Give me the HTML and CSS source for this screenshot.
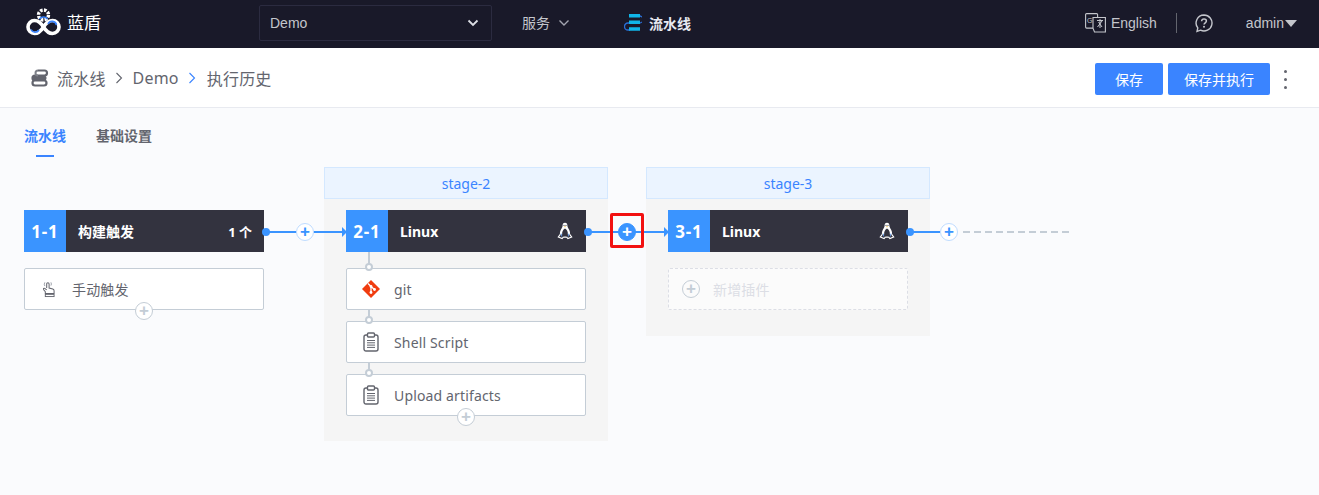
FILE: index.html
```html
<!DOCTYPE html>
<html>
<head>
  <title>蓝盾 流水线</title>
  <link rel="stylesheet" href="styles.css">
</head>
<body>
  <svg class="defs" width="0" height="0">
    <symbol id="penguin" viewBox="0 0 16 18">
      <path d="M8 .8C6.300 .8 5.600 2 5.600 3.600c0 1.600-.8 2.500-1.600 3.900C3.100 9.100 2.700 10.800 3 12.400h2.200C4.900 10 5.900 7.800 8 6.600c2.100 1.200 3.100 3.400 2.800 5.800H13c.3-1.600-.1-3.300-1-4.900-.8-1.400-1.600-2.300-1.600-3.900C10.400 2 9.700 .8 8 .8z" fill="#fff"/>
      <circle cx="7" cy="3.300" r=".6" fill="#33333f"/>
      <circle cx="9" cy="3.300" r=".6" fill="#33333f"/>
      <path d="M6.900 4.300h2.200L8 5.500z" fill="#f4c24a"/>
      <path d="M3.300 12.400L1.300 15.100l3.800 1.500 1.200-1.500M12.700 12.400l2 2.700-3.800 1.500-1.200-1.500M6.300 15.100h3.400" fill="none" stroke="#fff" stroke-width="1.100"/>
      <path d="M4.200 11.500l.6 3M11.800 11.500l-.6 3" stroke="#6aa8ff" stroke-width=".8"/>
    </symbol>
    <symbol id="clipboard" viewBox="0 0 16 20">
      <rect x="1" y="3" width="14" height="16" rx="2" fill="none" stroke="#63656e" stroke-width="1.400"/>
      <rect x="4.500" y="1" width="7" height="4" rx="1" fill="#fff" stroke="#63656e" stroke-width="1.400"/>
      <path d="M4 8.500h8M4 10.800h8M4 13.100h8M4 15.400h8" stroke="#63656e"/>
    </symbol>
  </svg>

  <header class="topbar">
    <div class="logo">
      <svg width="36" height="30" viewBox="0 0 36 30">
        <circle cx="17.500" cy="7" r="5" fill="none" stroke="#fff" stroke-width="3.400" stroke-dasharray="2.600 1.300"/>
        <path d="M17.500 19C15 15 12.500 12.500 8.500 12.500a6.500 6.500 0 0 0 0 13c4 0 6.500-2.500 9-6.500c2.500-4 5-6.500 9-6.500a6.500 6.500 0 0 1 0 13c-4 0-6.500-2.500-9-6.500z" fill="none" stroke="#fff" stroke-width="3.600"/>
        <path d="M5 21.500a4.500 4.500 0 0 0 8 .5M22 16a4.500 4.500 0 0 1 8.500 1M13.500 11a5 5 0 0 1 8 0" fill="none" stroke="#3a84ff" stroke-width="1.600"/>
      </svg>
      <span>蓝盾</span>
    </div>
    <div class="project-select">
      <span>Demo</span>
      <svg width="12" height="8" viewBox="0 0 12 8"><path d="M1.500 1.500L6 6l4.500-4.500" fill="none" stroke="#dcdee5" stroke-width="1.800"/></svg>
    </div>
    <div class="nav-item">
      <span class="nav-label">服务</span>
      <svg width="12" height="8" viewBox="0 0 12 8"><path d="M1.500 1.500L6 6l4.500-4.500" fill="none" stroke="#a3a5b0" stroke-width="1.400"/></svg>
    </div>
    <div class="nav-item nav-active">
      <svg width="18" height="20" viewBox="0 0 18 20">
        <path d="M14 3h1.500a3.500 3.500 0 0 1 0 7H4a3.500 3.500 0 0 0 0 7h2" fill="none" stroke="#2a6fd8" stroke-width="1.300"/>
        <path d="M5 1h11v3.400H5zM5 7.600h11V11H5zM5 14.200h11v3.600H5z" fill="#10b5e8"/>
      </svg>
      <span>流水线</span>
    </div>
    <div class="top-right">
      <div class="lang">
        <svg width="21" height="20" viewBox="0 0 21 20">
          <rect x=".6" y=".6" width="12" height="14.500" rx="1" fill="none" stroke="#c4c6cc" stroke-width="1.100"/>
          <path d="M8 4.500h12.400V19H9.500L8 15.200z" fill="#191929" stroke="#c4c6cc" stroke-width="1.100"/>
          <path d="M12 7.500h6M15 6v9M12.500 14l4.500-6M13.500 9l3.500 5" stroke="#c4c6cc" fill="none"/>
          <text x="2" y="10" class="lang-g">G</text>
        </svg>
        <span>English</span>
      </div>
      <i class="top-sep"></i>
      <svg class="help" width="18" height="19" viewBox="0 0 18 19">
        <path d="M9 1a8 8 0 1 1-3.500 15.200L2 17.500l.8-3.600A8 8 0 0 1 9 1z" fill="none" stroke="#c4c6cc" stroke-width="1.400"/>
        <path d="M6.600 7.200C6.700 5.700 7.700 5 9 5c1.400 0 2.400.8 2.400 2 0 1.800-2.400 1.800-2.400 3.600" fill="none" stroke="#c4c6cc" stroke-width="1.500"/>
        <circle cx="9" cy="12.800" r="1" fill="#c4c6cc"/>
      </svg>
      <div class="user">
        <span>admin</span>
        <i class="caret"></i>
      </div>
    </div>
  </header>

  <div class="subbar">
    <div class="crumbs">
      <svg width="20" height="20" viewBox="0 0 20 20">
        <path d="M9 2.500h6.500a2.500 2.500 0 0 1 0 5H6a2.500 2.500 0 0 0 0 5h9a2.500 2.500 0 0 1 0 5H6a2.500 2.500 0 0 1 0-5" fill="none" stroke="#63656e" stroke-width="2.200"/>
        <path d="M6 7.500h9a2.500 2.500 0 0 1 0 5H6a2.500 2.500 0 0 1 0-5z" fill="#63656e"/>
        <path d="M9 2.500a2.500 2.500 0 0 0 0 5" fill="none" stroke="#7d8088" stroke-width="2"/>
      </svg>
      <span>流水线</span>
      <svg class="crumb-arrow" width="8" height="12" viewBox="0 0 8 12"><path d="M1.500 1L6.500 6l-5 5" fill="none" stroke="#63656e" stroke-width="1.100"/></svg>
      <span>Demo</span>
      <svg class="crumb-arrow" width="8" height="12" viewBox="0 0 8 12"><path d="M1.500 1L6.500 6l-5 5" fill="none" stroke="#3a84ff" stroke-width="1.100"/></svg>
      <span class="crumb-last">执行历史</span>
    </div>
    <div class="actions">
      <button class="btn btn-save">保存</button>
      <button class="btn btn-run">保存并执行</button>
      <div class="more"><i></i><i></i><i></i></div>
    </div>
  </div>

  <main class="content">
    <div class="tabs">
      <div class="tab tab-active">流水线</div>
      <div class="tab">基础设置</div>
    </div>

    <div class="pipeline">
      <section class="stage stage-plain">
        <div class="stage-head"></div>
        <div class="job">
          <span class="job-no">1-1</span>
          <span class="job-name job-name-cn">构建触发</span>
          <span class="job-count">1 个</span>
          <div class="link">
            <span class="plus">+</span>
          </div>
        </div>
        <div class="atom atom-first">
          <svg class="atom-icon icon-hand" width="12" height="18" viewBox="2 0 13 18">
            <path d="M6 8V3.500a1.300 1.300 0 0 1 2.600 0V8l4 1c1 .3 1.400 1 1.400 2v3H4.500v-2L2.500 9.500c-.5-.9.500-1.800 1.400-1.200L6 10" fill="none" stroke="#63656e" stroke-width="1.100"/>
            <path d="M4 1.800a3.600 3.600 0 0 0 0 4M10.600 1.800a3.600 3.600 0 0 1 0 3.500" fill="none" stroke="#979ba5"/>
            <rect x="4.500" y="14.800" width="9.500" height="2.400" fill="none" stroke="#63656e"/>
          </svg>
          <span class="atom-cn">手动触发</span>
          <span class="plus plus-grey">+</span>
        </div>
      </section>

      <section class="stage">
        <div class="stage-head">stage-2</div>
        <div class="job">
          <span class="job-no">2-1</span>
          <span class="job-name">Linux</span>
          <svg class="penguin" width="16" height="18"><use href="#penguin"/></svg>
          <div class="link link-active">
            <span class="plus plus-solid">+</span>
            <b class="link-mark"></b>
          </div>
        </div>
        <div class="atom atom-first">
          <i class="joint"></i>
          <svg class="atom-icon icon-git" width="18" height="18" viewBox="0 0 18 18">
            <path d="M9 0l9 9-9 9-9-9z" fill="#f03c0f"/>
            <path d="M6 3.500l3 3M9 6.500v6M9 6.500l3.500 3" stroke="#fff" stroke-width="1.300" fill="none"/>
            <circle cx="9" cy="6.500" r="1.400" fill="#fff"/>
            <circle cx="9" cy="12.500" r="1.400" fill="#fff"/>
            <circle cx="12.500" cy="9.500" r="1.400" fill="#fff"/>
          </svg>
          <span>git</span>
        </div>
        <div class="atom">
          <i class="joint"></i>
          <svg class="atom-icon icon-clip" width="16" height="20"><use href="#clipboard"/></svg>
          <span>Shell Script</span>
        </div>
        <div class="atom">
          <i class="joint"></i>
          <svg class="atom-icon icon-clip" width="16" height="20"><use href="#clipboard"/></svg>
          <span>Upload artifacts</span>
          <span class="plus plus-grey">+</span>
        </div>
      </section>

      <section class="stage stage-short">
        <div class="stage-head">stage-3</div>
        <div class="job">
          <span class="job-no">3-1</span>
          <span class="job-name">Linux</span>
          <svg class="penguin" width="16" height="18"><use href="#penguin"/></svg>
          <div class="link link-last">
            <span class="plus">+</span>
            <i class="dashes"></i>
          </div>
        </div>
        <div class="atom atom-first atom-new">
          <span class="new-plus">+</span>
          <span class="atom-cn">新增插件</span>
        </div>
      </section>
    </div>
  </main>
</body>
</html>
```

FILE: styles.css
```css
*,
*::before,
*::after {
  box-sizing: border-box;
}
html,
body {
  height: 100%;
}
body {
  margin: 0;
  overflow: hidden;
  display: flex;
  flex-direction: column;
  font-family: "Noto Sans", "Noto Sans CJK SC", sans-serif;
  font-size: 14px;
  color: #63656e;
  background: #fafbfd;
}
.defs {
  position: absolute;
}

/* top bar */
.topbar {
  display: flex;
  align-items: center;
  height: 48px;
  flex: none;
  padding-bottom: 2px;
  background: #191929;
  color: #c4c6cc;
  font-family: "Liberation Sans", "Noto Sans CJK SC", sans-serif;
}
.logo {
  display: flex;
  align-items: center;
  gap: 5px;
  width: 259px;
  padding-left: 26px;
  color: #fff;
  font-size: 17px;
}
.logo span,
.nav-label {
  padding-bottom: 3px;
}
.project-select {
  display: flex;
  align-items: center;
  justify-content: space-between;
  width: 233px;
  height: 36px;
  padding: 0 12px 0 10px;
  border: 1px solid #2b2b40;
  border-radius: 2px;
  color: #c4c6cc;
}
.nav-item {
  display: flex;
  align-items: center;
  gap: 8px;
  margin-left: 30px;
}
.nav-active {
  gap: 7px;
  margin-left: 54px;
  color: #e8eaf2;
  font-weight: 700;
}
.top-right {
  display: flex;
  align-items: center;
  margin-left: auto;
  padding-right: 22px;
}
.lang {
  display: flex;
  align-items: center;
  gap: 5px;
}
.lang-g {
  font-size: 7px;
  fill: #c4c6cc;
}
.top-sep {
  width: 1px;
  height: 20px;
  margin: 0 18px 0 19px;
  background: #63656e;
}
.help {
  margin-right: 33px;
}
.user {
  display: flex;
  align-items: center;
  gap: 1px;
}
.caret {
  width: 0;
  height: 0;
  border-left: 6px solid transparent;
  border-right: 6px solid transparent;
  border-top: 7px solid #c4c6cc;
}

/* breadcrumb bar */
.subbar {
  display: flex;
  align-items: center;
  justify-content: space-between;
  height: 60px;
  flex: none;
  padding: 3px 34px 0 29px;
  background: #fff;
  border-bottom: 1px solid #e8eaf0;
}
.crumbs {
  display: flex;
  align-items: center;
  padding-bottom: 3px;
  font-size: 16px;
  letter-spacing: .2px;
}
.crumbs span {
  margin-left: 8px;
}
.crumbs .crumb-last {
  margin-left: 9px;
}
.crumb-arrow {
  margin-left: 9px;
  margin-right: 2px;
}
.actions {
  display: flex;
  align-items: center;
  gap: 5px;
}
.btn {
  height: 32px;
  padding: 0;
  border: 0;
  border-radius: 2px;
  background: #3a84ff;
  color: #fff;
  font: inherit;
  font-size: 14px;
}
.btn-save {
  width: 68px;
}
.btn-run {
  width: 102px;
}
.more {
  display: flex;
  flex-direction: column;
  gap: 5px;
  margin-left: 9px;
  margin-right: -2px;
}
.more i {
  width: 3px;
  height: 3px;
  border-radius: 50%;
  background: #63656e;
}

/* tabs */
.content {
  flex: 1;
}
.tabs {
  display: flex;
  gap: 30px;
  padding-left: 24px;
  height: 59px;
}
.tab {
  position: relative;
  padding-top: 18px;
  font-size: 14px;
  font-weight: 700;
  line-height: 20px;
  color: #63656e;
}
.tab-active {
  color: #3a84ff;
}
.tab-active::after {
  content: "";
  position: absolute;
  left: 12px;
  top: 47px;
  width: 18px;
  height: 2px;
  background: #3a84ff;
}

/* pipeline */
.pipeline {
  display: flex;
  align-items: flex-start;
  gap: 38px;
  margin-left: 2px;
}
.stage {
  width: 284px;
  height: 274px;
  padding: 0 22px;
  background: #f5f5f5;
}
.stage-short {
  height: 169px;
}
.stage-plain {
  background: none;
}
.stage-head {
  height: 32px;
  margin: 0 -22px 11px;
  border: 1px solid #d4e8ff;
  background: #ebf4ff;
  color: #3a84ff;
  font-size: 14px;
  line-height: 32px;
  text-align: center;
}
.stage-plain .stage-head {
  visibility: hidden;
}
.job {
  position: relative;
  display: flex;
  align-items: center;
  height: 42px;
  background: #33333f;
  color: #fff;
}
.job-no {
  width: 42px;
  height: 100%;
  background: #3a94ff;
  font-size: 17px;
  font-weight: 700;
  letter-spacing: .8px;
  line-height: 43px;
  text-align: center;
}
.job-name {
  flex: 1;
  padding-left: 12px;
  font-weight: 700;
}
.job-name-cn {
  font-size: 14px;
}
.job-count {
  padding-right: 12px;
  font-size: 13px;
  font-weight: 700;
}
.penguin {
  margin-right: 13px;
}

/* connector between jobs */
.link {
  position: absolute;
  left: 100%;
  top: 21px;
  width: 82px;
  height: 2px;
  background: #3a94ff;
}
.link::before {
  content: "";
  position: absolute;
  left: -2px;
  top: -3px;
  width: 8px;
  height: 8px;
  border-radius: 50%;
  background: #3a94ff;
}
.link::after {
  content: "";
  position: absolute;
  right: -1px;
  top: -4px;
  border-left: 5px solid #3a94ff;
  border-top: 5px solid transparent;
  border-bottom: 5px solid transparent;
}
.link .plus {
  position: absolute;
  left: 32px;
  top: -8px;
}
.link-last {
  width: 32px;
}
.link-last::after {
  display: none;
}
.dashes {
  position: absolute;
  left: 55px;
  top: 0;
  width: 106px;
  height: 2px;
  background: repeating-linear-gradient(90deg, #c4cdd6 0 7px, transparent 7px 11px);
}
.plus {
  display: block;
  width: 18px;
  height: 18px;
  border: 1px solid #bfdcff;
  border-radius: 50%;
  background: #fff;
  color: #3a94ff;
  font-size: 17px;
  font-weight: 700;
  line-height: 15px;
  text-align: center;
  font-family: "Liberation Sans", sans-serif;
}
.plus-solid {
  border-color: #3a94ff;
  background: #3a94ff;
  color: #fff;
}
.plus-grey {
  position: absolute;
  left: 110px;
  bottom: -11px;
  border-color: #c4cdd6;
  color: #c4cdd6;
}
.link-mark {
  position: absolute;
  left: 24px;
  top: -18px;
  width: 34px;
  height: 35px;
  border: 3px solid #f21111;
  border-radius: 2px;
}

/* plugin rows */
.atom {
  position: relative;
  display: flex;
  align-items: center;
  height: 42px;
  margin-top: 11px;
  padding-left: 15px;
  background: #fff;
  border: 1px solid #c4cdd6;
  border-radius: 2px;
  letter-spacing: .15px;
}
.atom-first {
  margin-top: 16px;
}
.atom-icon {
  margin-right: 15px;
}
.icon-git {
  margin-right: 14px;
}
.icon-clip {
  margin-left: 1px;
}
.icon-hand {
  margin-left: 3px;
  margin-right: 17px;
}
.joint {
  position: absolute;
  left: 21px;
  top: -12px;
  width: 2px;
  height: 11px;
  background: #c4cdd6;
}
.atom-first .joint {
  top: -17px;
  height: 16px;
}
.joint::after {
  content: "";
  position: absolute;
  left: -3px;
  bottom: -3px;
  width: 8px;
  height: 8px;
  border: 2px solid #c4cdd6;
  border-radius: 50%;
  background: #fff;
}
.atom-new {
  border: 1px dashed #dcdee5;
  background: #fbfbfb;
  padding-left: 13px;
}
.new-plus {
  width: 18px;
  height: 18px;
  border: 1px solid #c4cdd6;
  border-radius: 50%;
  color: #c4cdd6;
  font-family: "Liberation Sans", sans-serif;
  font-size: 17px;
  font-weight: 700;
  line-height: 15px;
  text-align: center;
}
.atom-new .atom-cn {
  margin-left: 13px;
  color: #dcdee5;
}
```
